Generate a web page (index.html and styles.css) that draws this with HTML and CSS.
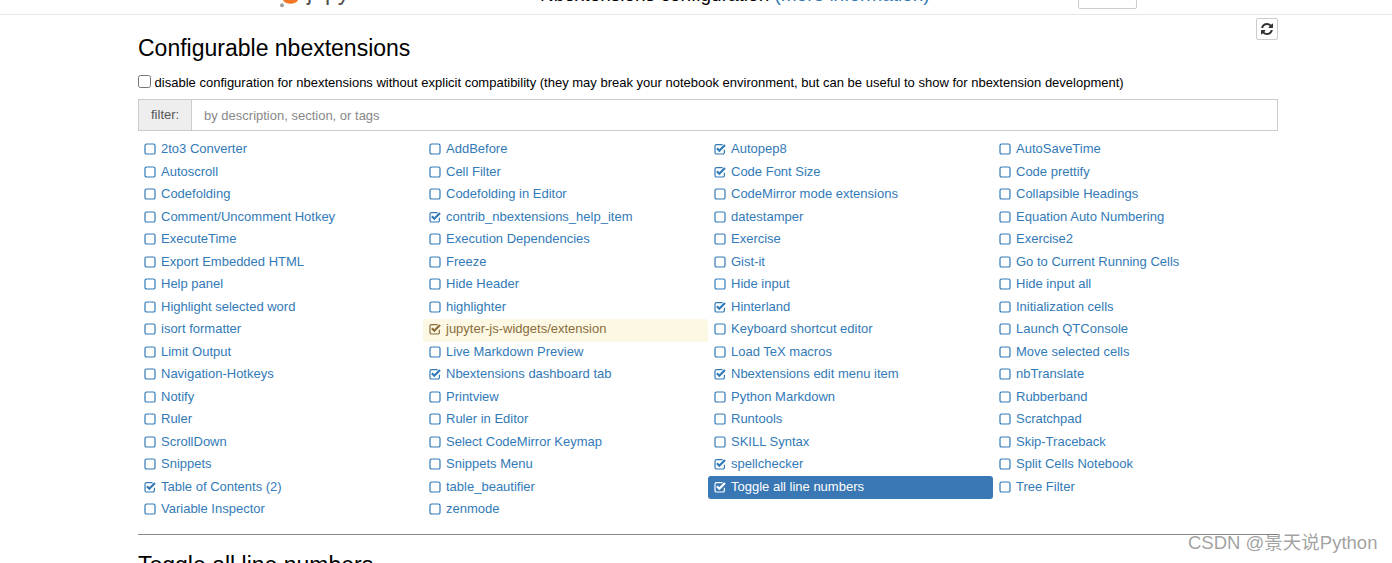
FILE: index.html
```html
<!DOCTYPE html>
<html lang="en">
<head>
    <meta charset="UTF-8">
    <meta name="viewport" content="width=device-width, initial-scale=1.0">
    <title>Nbextensions configuration</title>
    <link rel="stylesheet" href="styles.css">
</head>
<body>
<svg class="defs" width="0" height="0">
    <symbol id="off" viewBox="0 0 12 12">
        <rect x="1" y="1" width="10" height="10" rx="1.600" fill="none" stroke="currentColor" stroke-width="1.200"/>
    </symbol>
    <symbol id="on" viewBox="0 0 12 12">
        <path d="M10.4 6.800V9.400a1.600 1.600 0 0 1-1.600 1.600H2.600a1.600 1.600 0 0 1-1.600-1.600V3.200a1.600 1.600 0 0 1 1.600-1.600h6" fill="none" stroke="currentColor" stroke-width="1.200"/>
        <path d="M2.900 5.300L5.300 7.700L11 2" fill="none" stroke="currentColor" stroke-width="2.200"/>
    </symbol>
</svg>

<header class="topbar">
    <div class="logo">
        <svg width="24" height="14" viewBox="0 0 24 14">
            <path d="M4 0C6 5 17 5 19 0Z" fill="#f37726"/>
            <circle cx="3" cy="5.300" r="2" fill="#9e9e9e"/>
        </svg>
        <span class="logo-text">jupyter</span>
    </div>
    <div class="page-title">Nbextensions configuration <a href="#">(more information)</a></div>
    <div class="logout"></div>
</header>

<main class="container">
    <div class="refresh-row">
        <button class="refresh">
            <svg width="12" height="12" viewBox="0 0 1536 1536"><path d="M1511 928q0 5-1 7-64 268-268 434.500t-478 166.500q-146 0-282.500-55t-243.500-157l-129 129q-19 19-45 19t-45-19-19-45v-448q0-26 19-45t45-19h448q26 0 45 19t19 45-19 45l-137 137q71 66 161 102t187 36q134 0 250-65t186-179q11-17 53-117 8-23 30-23h192q13 0 22.500 9.500t9.500 22.500zm25-800v448q0 26-19 45t-45 19h-448q-26 0-45-19t-19-45 19-45l138-138q-148-137-349-137-134 0-250 65t-186 179q-11 17-53 117-8 23-30 23h-199q-13 0-22.500-9.500t-9.500-22.500v-7q65-268 270-434.500t480-166.500q146 0 284 55.500t245 156.500l130-129q19-19 45-19t45 19 19 45z" fill="#333"/></svg>
        </button>
    </div>
    <h3>Configurable nbextensions</h3>
    <label class="compat"><input type="checkbox"> disable configuration for nbextensions without explicit compatibility (they may break your notebook environment, but can be useful to show for nbextension development)</label>
    <div class="filter">
        <span class="filter-label">filter:</span>
        <input class="filter-input" type="text" placeholder="by description, section, or tags">
    </div>
    <ul class="ext-list">
        <li><svg class="ico"><use href="#off"/></svg>2to3 Converter</li>
        <li><svg class="ico"><use href="#off"/></svg>AddBefore</li>
        <li><svg class="ico"><use href="#on"/></svg>Autopep8</li>
        <li><svg class="ico"><use href="#off"/></svg>AutoSaveTime</li>
        <li><svg class="ico"><use href="#off"/></svg>Autoscroll</li>
        <li><svg class="ico"><use href="#off"/></svg>Cell Filter</li>
        <li><svg class="ico"><use href="#on"/></svg>Code Font Size</li>
        <li><svg class="ico"><use href="#off"/></svg>Code prettify</li>
        <li><svg class="ico"><use href="#off"/></svg>Codefolding</li>
        <li><svg class="ico"><use href="#off"/></svg>Codefolding in Editor</li>
        <li><svg class="ico"><use href="#off"/></svg>CodeMirror mode extensions</li>
        <li><svg class="ico"><use href="#off"/></svg>Collapsible Headings</li>
        <li><svg class="ico"><use href="#off"/></svg>Comment/Uncomment Hotkey</li>
        <li><svg class="ico"><use href="#on"/></svg>contrib_nbextensions_help_item</li>
        <li><svg class="ico"><use href="#off"/></svg>datestamper</li>
        <li><svg class="ico"><use href="#off"/></svg>Equation Auto Numbering</li>
        <li><svg class="ico"><use href="#off"/></svg>ExecuteTime</li>
        <li><svg class="ico"><use href="#off"/></svg>Execution Dependencies</li>
        <li><svg class="ico"><use href="#off"/></svg>Exercise</li>
        <li><svg class="ico"><use href="#off"/></svg>Exercise2</li>
        <li><svg class="ico"><use href="#off"/></svg>Export Embedded HTML</li>
        <li><svg class="ico"><use href="#off"/></svg>Freeze</li>
        <li><svg class="ico"><use href="#off"/></svg>Gist-it</li>
        <li><svg class="ico"><use href="#off"/></svg>Go to Current Running Cells</li>
        <li><svg class="ico"><use href="#off"/></svg>Help panel</li>
        <li><svg class="ico"><use href="#off"/></svg>Hide Header</li>
        <li><svg class="ico"><use href="#off"/></svg>Hide input</li>
        <li><svg class="ico"><use href="#off"/></svg>Hide input all</li>
        <li><svg class="ico"><use href="#off"/></svg>Highlight selected word</li>
        <li><svg class="ico"><use href="#off"/></svg>highlighter</li>
        <li><svg class="ico"><use href="#on"/></svg>Hinterland</li>
        <li><svg class="ico"><use href="#off"/></svg>Initialization cells</li>
        <li><svg class="ico"><use href="#off"/></svg>isort formatter</li>
        <li class="warn"><svg class="ico"><use href="#on"/></svg>jupyter-js-widgets/extension</li>
        <li><svg class="ico"><use href="#off"/></svg>Keyboard shortcut editor</li>
        <li><svg class="ico"><use href="#off"/></svg>Launch QTConsole</li>
        <li><svg class="ico"><use href="#off"/></svg>Limit Output</li>
        <li><svg class="ico"><use href="#off"/></svg>Live Markdown Preview</li>
        <li><svg class="ico"><use href="#off"/></svg>Load TeX macros</li>
        <li><svg class="ico"><use href="#off"/></svg>Move selected cells</li>
        <li><svg class="ico"><use href="#off"/></svg>Navigation-Hotkeys</li>
        <li><svg class="ico"><use href="#on"/></svg>Nbextensions dashboard tab</li>
        <li><svg class="ico"><use href="#on"/></svg>Nbextensions edit menu item</li>
        <li><svg class="ico"><use href="#off"/></svg>nbTranslate</li>
        <li><svg class="ico"><use href="#off"/></svg>Notify</li>
        <li><svg class="ico"><use href="#off"/></svg>Printview</li>
        <li><svg class="ico"><use href="#off"/></svg>Python Markdown</li>
        <li><svg class="ico"><use href="#off"/></svg>Rubberband</li>
        <li><svg class="ico"><use href="#off"/></svg>Ruler</li>
        <li><svg class="ico"><use href="#off"/></svg>Ruler in Editor</li>
        <li><svg class="ico"><use href="#off"/></svg>Runtools</li>
        <li><svg class="ico"><use href="#off"/></svg>Scratchpad</li>
        <li><svg class="ico"><use href="#off"/></svg>ScrollDown</li>
        <li><svg class="ico"><use href="#off"/></svg>Select CodeMirror Keymap</li>
        <li><svg class="ico"><use href="#off"/></svg>SKILL Syntax</li>
        <li><svg class="ico"><use href="#off"/></svg>Skip-Traceback</li>
        <li><svg class="ico"><use href="#off"/></svg>Snippets</li>
        <li><svg class="ico"><use href="#off"/></svg>Snippets Menu</li>
        <li><svg class="ico"><use href="#on"/></svg>spellchecker</li>
        <li><svg class="ico"><use href="#off"/></svg>Split Cells Notebook</li>
        <li><svg class="ico"><use href="#on"/></svg>Table of Contents (2)</li>
        <li><svg class="ico"><use href="#off"/></svg>table_beautifier</li>
        <li class="active"><svg class="ico"><use href="#on"/></svg>Toggle all line numbers</li>
        <li><svg class="ico"><use href="#off"/></svg>Tree Filter</li>
        <li><svg class="ico"><use href="#off"/></svg>Variable Inspector</li>
        <li><svg class="ico"><use href="#off"/></svg>zenmode</li>
    </ul>
    <hr>
    <h3>Toggle all line numbers</h3>
</main>

<div class="watermark">CSDN @景天说Python</div>
</body>
</html>
```

FILE: styles.css
```css
html, body {
    height: 563px;
    overflow: hidden;
}
body {
    margin: 0;
    background-color: #fff;
    color: #000;
    font-family: "Liberation Sans", Arial, sans-serif;
    font-size: 13px;
    line-height: 18px;
}
.defs {
    display: block;
    height: 0;
}
.topbar {
    display: flex;
    align-items: flex-end;
    height: 14px;
    overflow: hidden;
    border-bottom: 1px solid #e7e7e7;
}
.logo {
    display: flex;
    align-items: flex-end;
    flex: none;
    width: 260px;
    margin-left: 279px;
}
.logo svg {
    flex: none;
}
.logo-text {
    margin-left: 4px;
    margin-bottom: 11px;
    font-size: 23px;
    line-height: 22px;
    color: #4e4e4e;
}
.page-title {
    flex: none;
    width: 538px;
    margin-left: 1px;
    margin-bottom: 9px;
    font-size: 19px;
    line-height: 20px;
}
.page-title a {
    color: #337ab7;
    text-decoration: none;
}
.logout {
    flex: none;
    width: 57px;
    height: 30px;
    margin-bottom: 5px;
    border: 1px solid #ccc;
    border-radius: 2px;
}
.container {
    width: 1140px;
    margin-left: 138px;
}
.refresh-row {
    display: flex;
    justify-content: flex-end;
    height: 0;
    padding-top: 3px;
}
.refresh {
    display: flex;
    align-items: center;
    justify-content: center;
    width: 22px;
    height: 22px;
    padding: 0;
    background-color: #fff;
    border: 1px solid #ccc;
    border-radius: 2px;
}
h3 {
    margin: 17px 0 0;
    font-size: 23px;
    font-weight: 400;
    line-height: 26px;
}
.compat {
    display: block;
    margin-top: 12px;
    line-height: 20px;
}
.compat input {
    margin: 0;
    vertical-align: -1px;
}
.filter {
    display: flex;
    height: 32px;
    margin-top: 6px;
    box-sizing: border-box;
    border: 1px solid #ccc;
}
.filter-label {
    width: 53px;
    flex: none;
    box-sizing: border-box;
    padding: 6px 0 0 12px;
    background-color: #eee;
    border-right: 1px solid #ccc;
    color: #555;
}
.filter-input {
    flex: 1;
    padding: 0 12px;
    border: 0;
    outline: 0;
    font-family: inherit;
    font-size: 13px;
}
.filter-input::placeholder {
    color: #888;
}
.ext-list {
    display: grid;
    grid-template-columns: repeat(4, 285px);
    grid-auto-rows: 22.5px;
    margin: 8.5px 0 0;
    padding: 0;
    list-style: none;
    color: #337ab7;
}
.ext-list li {
    display: flex;
    align-items: center;
    padding: 0 6px 2px;
    margin-top: -1px;
    margin-bottom: 0.5px;
    border-radius: 3px;
    white-space: nowrap;
}
.ico {
    flex: none;
    width: 12px;
    height: 12px;
    margin-right: 5px;
}
.ext-list li.warn {
    background-color: #fcf8e3;
    color: #8a6d3b;
}
.ext-list li.active {
    background-color: #3a77b5;
    color: #fff;
}
hr {
    margin: 12px 0 0;
    border: 0;
    border-top: 1px solid #888;
}
hr + h3 {
    margin-top: 17px;
}
.watermark {
    position: absolute;
    left: 1188px;
    top: 530px;
    font-family: "Liberation Sans", "Noto Sans CJK SC", sans-serif;
    font-size: 18.500px;
    line-height: 26px;
    color: rgba(120, 120, 120, 0.7);
    white-space: nowrap;
}
```
